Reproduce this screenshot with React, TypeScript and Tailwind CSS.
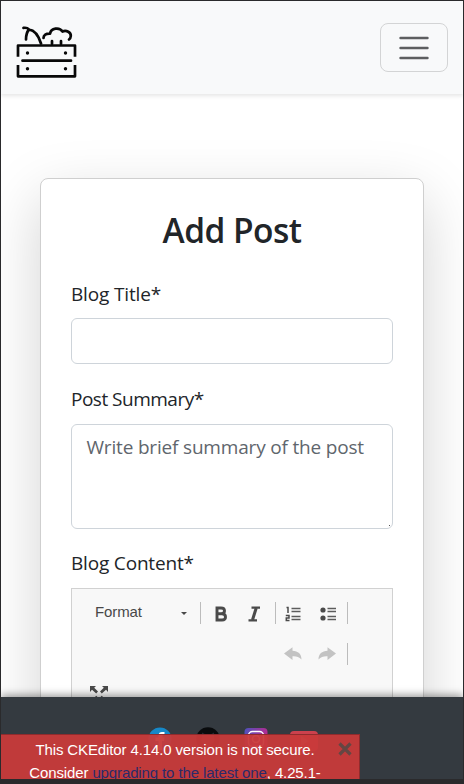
import type { ReactNode } from "react";

const ink = "#4a4a4a";

function CrateLogo() {
  return (
    <svg width="64" height="56" viewBox="0 0 64 56" fill="none" stroke="#080808" strokeWidth="2.7" strokeLinecap="round" strokeLinejoin="round">
      <path d="M3 30.700V19.500H60V30.700M3 39V50.300H60V39" strokeLinecap="butt" />
      <path d="M7.500 34.700H56" />
      <path d="M8.500 1.900Q12 1.300 14 3.500Q22 4.500 26 17.500M14 3.500Q11 7 11 13.500" />
      <path d="M28.500 12C28.500 9 31 7.500 35 7.700C36 1.800 44.500 1 47.500 5.500C51.500 3.800 56 6.500 55.800 10C55.700 11.500 55 12.700 54 13.500M37 15V18M46 15V18" />
      <g fill="#080808" stroke="none">
        <circle cx="12.500" cy="27" r="1.700" />
        <circle cx="50.500" cy="27" r="1.700" />
        <circle cx="12.500" cy="42.800" r="1.700" />
        <circle cx="50.500" cy="42.800" r="1.700" />
      </g>
    </svg>
  );
}

function Label({ children, tracking }: { children: ReactNode; tracking: string }) {
  return <div className={`h-[30px] text-[19px] leading-[30px] whitespace-nowrap text-[#212529] ${tracking}`}>{children}</div>;
}

function Separator() {
  return <span className="h-[22px] w-px shrink-0 bg-[#bcbcbc]" />;
}

function ListIcon({ numbered = false }: { numbered?: boolean }) {
  return (
    <svg width="17" height="16" viewBox="0 0 17 16">
      {numbered ? (
        <path d="M1.500 1.500H3V7M.8 9.600H4V12H1.300V14.500H4.500" fill="none" stroke={ink} strokeWidth="1.500" />
      ) : (
        <g fill={ink}>
          <circle cx="3" cy="4" r="2.600" />
          <circle cx="3" cy="12" r="2.600" />
        </g>
      )}
      <path d={numbered ? "M6.500 2.500H15.500M6.500 5.500H15.500M6.500 10.500H15.500M6.500 13.500H15.500" : "M7.500 2.500H16M7.500 5.500H16M7.500 10.500H16M7.500 13.500H16"} stroke="#5c5c5c" strokeWidth="1.300" />
    </svg>
  );
}

function UndoIcon({ flip = false }: { flip?: boolean }) {
  return (
    <svg width="18" height="14" viewBox="0 0 18 14" className={flip ? "-scale-x-100" : ""}>
      <path d="M0 6.500L8.500 .3V3.800C14 4 17.500 7 17.500 12.500C15 9.500 12 9 8.500 9.200V13Z" fill="#c3c3c3" />
    </svg>
  );
}

function Socials() {
  return (
    <div className="flex h-6 items-center pl-[147px]">
      <svg width="24" height="24" viewBox="0 0 24 24">
        <circle cx="12" cy="12" r="11.500" fill="#1688c8" />
        <path d="M10.500 23V14H7.500V10.500H10.500V8.500C10.500 6 12 5 14 5H16.500V8H14.500V10.500H16.500L16 14H14V23Z" fill="#fff" />
      </svg>
      <svg className="ml-6" width="24" height="24" viewBox="0 0 24 24">
        <circle cx="12" cy="12" r="11.800" fill="#090b0d" />
        <path d="M6 5.500L9.500 7.500H14.500L18 5.500V10.500C20 15 16 17 14.500 17V23H9.500V17C7 17 4 14 6 10.500Z" fill="#252a2f" />
      </svg>
      <svg className="ml-[24px]" width="24" height="24" viewBox="0 0 24 24">
        <defs>
          <linearGradient id="ig" x1="0" y1="0" x2="1" y2=".2">
            <stop stopColor="#4d52bd" />
            <stop offset="1" stopColor="#b42b91" />
          </linearGradient>
        </defs>
        <rect x=".5" y="1" width="23" height="23" rx="4" fill="url(#ig)" />
        <rect x="4.500" y="4.500" width="15" height="15" rx="4" fill="none" stroke="#fff" strokeWidth="1.500" />
        <circle cx="12" cy="12" r="3.500" fill="none" stroke="#fff" strokeWidth="1.500" />
      </svg>
      <svg className="mt-[3px] ml-[22px]" width="28" height="20" viewBox="0 0 28 20">
        <rect width="28" height="20" rx="4" fill="#cc414d" />
        <path d="M11 5L19 10L11 15Z" fill="#d98585" />
      </svg>
    </div>
  );
}

export default function App() {
  return (
    <div className="flex h-[784px] w-[464px] flex-col bg-[#2a2a2c] px-px pt-px pb-[5px] font-['Open_Sans','Noto_Sans',sans-serif]">
      <div className="relative h-[778px] overflow-hidden bg-white">
        <header className="relative z-10 flex h-[93px] items-center justify-between bg-[#f8f9fa] pr-[15px] pl-[14px] shadow-[0_2px_4px_rgba(0,0,0,0.1)]">
          <div className="mt-[13px]">
            <CrateLogo />
          </div>
          <button className="flex h-[49px] w-[68px] items-center justify-center rounded-lg border border-[#d3d4d5]">
            <svg width="30" height="24" viewBox="0 0 30 24" stroke="#5d5e60" strokeWidth="2.400" strokeLinecap="round">
              <path d="M1.500 2H28.500M1.500 12H28.500M1.500 22H28.500" />
            </svg>
          </button>
        </header>

        <main className="px-[39px] pt-[84px]">
          <section className="h-[700px] rounded-lg border border-[#cfcfcf] bg-white px-[30px] pt-[29px] shadow-[0_20px_60px_rgba(0,0,0,0.175)]">
            <h1 className="h-[45px] text-center text-[33.5px] leading-[45px] font-semibold tracking-[-0.55px] whitespace-nowrap text-[#212529]">Add Post</h1>
            <div className="mt-[26px]">
              <Label tracking="tracking-[-0.15px]">Blog Title*</Label>
              <div className="mt-[9px] h-[46px] rounded-md border border-[#ced4da]" />
            </div>
            <div className="mt-[20px]">
              <Label tracking="tracking-[-0.5px]">Post Summary*</Label>
              <div className="mt-[10px] flex h-[105px] items-end justify-between rounded-md border border-[#ced4da]">
                <span className="h-full pt-[7px] pl-[14.500px] text-[19px] leading-[30px] tracking-[-0.18px] whitespace-nowrap text-[#5f666d]">Write brief summary of the post</span>
                <span className="mr-[2px] mb-[2px] size-px bg-[#555]" />
              </div>
            </div>
            <div className="mt-[19px]">
              <Label tracking="tracking-[-0.18px]">Blog Content*</Label>
              <div className="mt-[10px] h-[200px] border border-[#d1d1d1] bg-[#f8f8f8] pt-[13px]">
                <div className="flex h-[22px] items-center">
                  <span className="mb-[2px] ml-[23px] w-[86px] font-['Liberation_Sans',Arial,sans-serif] text-[15px] tracking-[-0.1px] text-[#484848]">Format</span>
                  <span className="border-x-[3px] border-t-[3px] border-x-transparent border-t-[#484848]" />
                  <span className="w-[13px]" />
                  <Separator />
                  <svg className="mt-px ml-[14px]" width="12" height="16" viewBox="0 0 12 16">
                    <path d="M2 2H6Q9.500 2 9.500 4.800Q9.500 7.800 6 7.800H2ZM2 7.800H7Q10.500 8 10.500 11Q10.500 14 7 14H2Z" fill="none" stroke={ink} strokeWidth="2.900" />
                  </svg>
                  <svg className="mt-px ml-[21px]" width="13" height="16" viewBox="0 0 13 16" fill="none" stroke={ink}>
                    <path d="M3.500 1.700H12M.5 14.300H9" strokeWidth="2.200" />
                    <path d="M8.200 2L4.500 14" strokeWidth="3" />
                  </svg>
                  <span className="w-[14px]" />
                  <Separator />
                  <span className="mt-px ml-[9px]"><ListIcon numbered /></span>
                  <span className="mt-px ml-[18px]"><ListIcon /></span>
                  <span className="w-[10px]" />
                  <Separator />
                </div>
                <div className="mt-[19px] flex h-[22px] items-center pl-[212px]">
                  <UndoIcon />
                  <span className="w-[16px]" />
                  <UndoIcon flip />
                  <span className="w-[11px]" />
                  <Separator />
                </div>
                <svg className="mt-[21px] ml-[18px]" width="18" height="18" viewBox="0 0 18 18" fill={ink}>
                  <path d="M0 0H6L4.200 1.800L8 5.600L6.200 7.400L2 3.800L0 6ZM18 0H12L13.800 1.800L10 5.600L11.800 7.400L16 3.800L18 6ZM0 18V12L2 14.200L6.200 9.800L8 11.600L4.200 16.200L6 18ZM18 18V12L16 14.200L11.800 9.800L10 11.600L13.800 16.200L12 18Z" />
                </svg>
              </div>
            </div>
          </section>
        </main>

        <footer className="absolute inset-x-0 bottom-0 z-20 h-[82px] bg-[#343a40] pt-[30px] shadow-[0_-2px_8px_rgba(0,0,0,0.4)]">
          <Socials />
        </footer>

        <div className="absolute top-[733px] left-0 z-30 flex h-[60px] w-[359px] border border-l-0 border-[#902b2d] bg-[#c83a3a]/95 font-['Liberation_Sans',Arial,sans-serif] text-[15px] leading-[23px] tracking-[-0.12px] text-white">
          <p className="w-[348px] pt-[3px] text-center whitespace-nowrap">
            This CKEditor 4.14.0 version is not secure.
            <br />
            Consider <a className="text-[#2b2b6b]">upgrading to the latest one</a>, 4.25.1-
          </p>
          <svg className="absolute top-[7px] right-[7px]" width="14" height="14" viewBox="0 0 14 14" stroke="#644643" strokeWidth="3.200">
            <path d="M1.500 1.500L12.500 12.500M12.500 1.500L1.500 12.500" />
          </svg>
        </div>
      </div>
    </div>
  );
}
